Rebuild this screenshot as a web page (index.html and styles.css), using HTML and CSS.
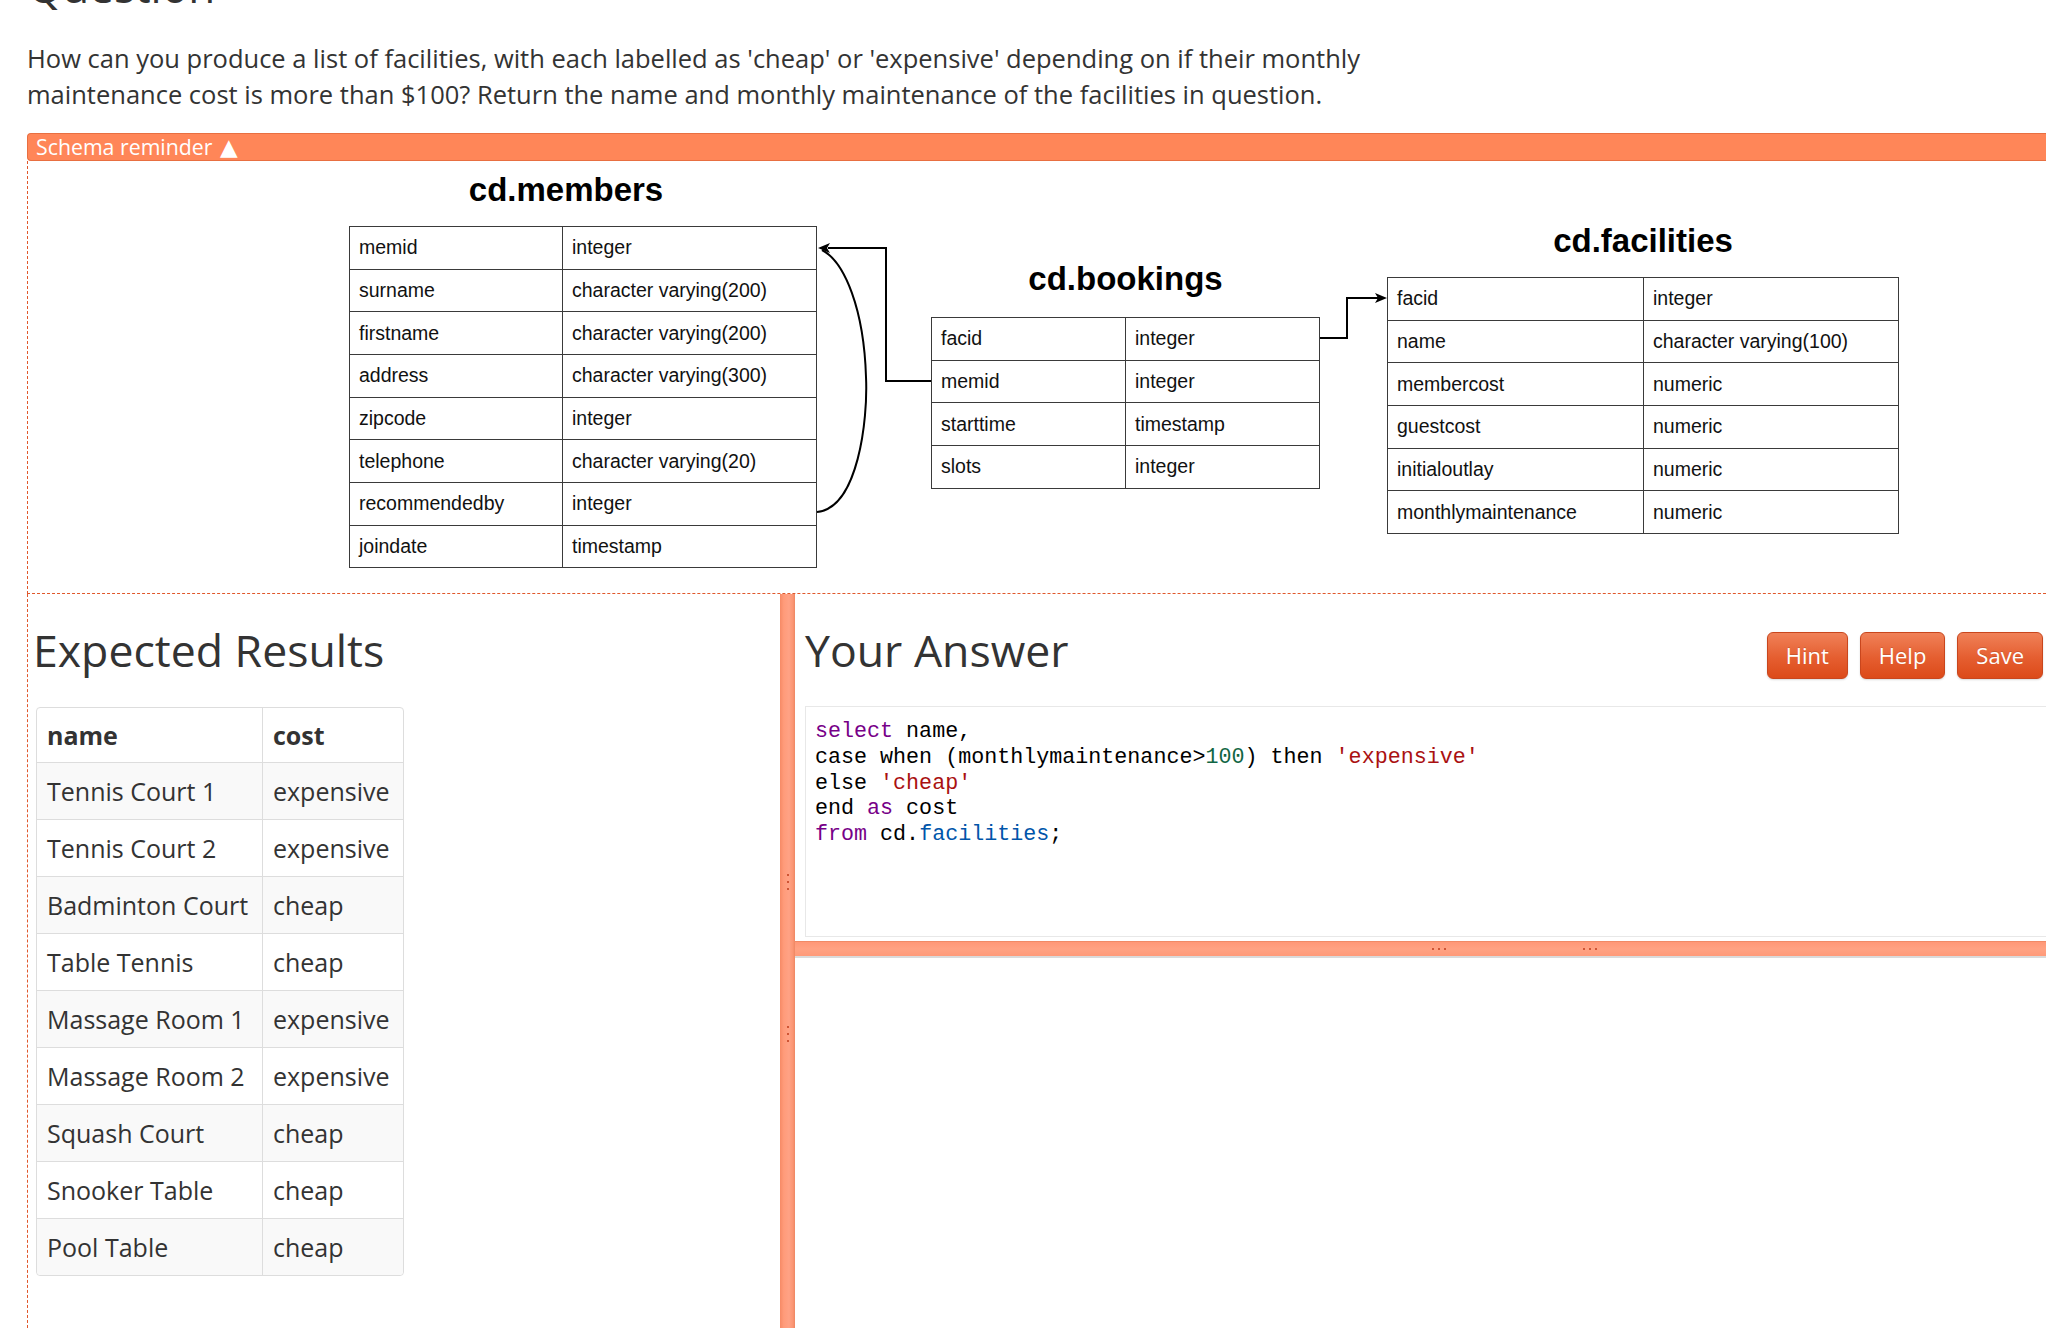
FILE: index.html
```html
<!DOCTYPE html>
<html lang="en">
<head>
<meta charset="utf-8">
<title>Question</title>
<link rel="stylesheet" href="styles.css">
</head>
<body>
<div class="page">
  <h1 class="q-title">Question</h1>
  <p class="q-text">How can you produce a list of facilities, with each labelled as 'cheap' or 'expensive' depending on if their monthly<br>maintenance cost is more than $100? Return the name and monthly maintenance of the facilities in question.</p>

  <div class="schema-bar">Schema reminder <span class="tri">&#9650;</span></div>
  <div class="schema-panel">
    <div class="diagram">
      <svg class="links" width="1900" height="432" viewBox="0 0 1900 432">
        <polyline points="903,220 858,220 858,87 800,87" fill="none" stroke="#000" stroke-width="2"/>
        <path d="M 789 351 C 830 347, 840 259, 838 216 C 836 149, 817 101, 794 89" fill="none" stroke="#000" stroke-width="2"/>
        <polygon points="790,87 802,82 799,87 802,92" fill="#000"/>
        <polyline points="1292,177 1319,177 1319,137 1350,137" fill="none" stroke="#000" stroke-width="2"/>
        <polygon points="1359,137 1347,132 1350,137 1347,142" fill="#000"/>
      </svg>

      <div class="node node-members">
        <div class="node-title node-title-shift">cd.members</div>
        <table class="er">
          <colgroup><col class="c-members"><col></colgroup>
          <tr><td>memid</td><td>integer</td></tr>
          <tr><td>surname</td><td>character varying(200)</td></tr>
          <tr><td>firstname</td><td>character varying(200)</td></tr>
          <tr><td>address</td><td>character varying(300)</td></tr>
          <tr><td>zipcode</td><td>integer</td></tr>
          <tr><td>telephone</td><td>character varying(20)</td></tr>
          <tr><td>recommendedby</td><td>integer</td></tr>
          <tr><td>joindate</td><td>timestamp</td></tr>
        </table>
      </div>

      <div class="node node-bookings">
        <div class="node-title">cd.bookings</div>
        <table class="er">
          <colgroup><col class="c-bookings"><col></colgroup>
          <tr><td>facid</td><td>integer</td></tr>
          <tr><td>memid</td><td>integer</td></tr>
          <tr><td>starttime</td><td>timestamp</td></tr>
          <tr><td>slots</td><td>integer</td></tr>
        </table>
      </div>

      <div class="node node-facilities">
        <div class="node-title">cd.facilities</div>
        <table class="er">
          <colgroup><col class="c-facilities"><col></colgroup>
          <tr><td>facid</td><td>integer</td></tr>
          <tr><td>name</td><td>character varying(100)</td></tr>
          <tr><td>membercost</td><td>numeric</td></tr>
          <tr><td>guestcost</td><td>numeric</td></tr>
          <tr><td>initialoutlay</td><td>numeric</td></tr>
          <tr><td>monthlymaintenance</td><td>numeric</td></tr>
        </table>
      </div>
    </div>
  </div>

  <div class="workspace">
    <section class="expected">
      <h2 class="pane-title">Expected Results</h2>
      <table class="results">
        <colgroup><col class="r-c1"><col class="r-c2"></colgroup>
        <thead><tr><th>name</th><th>cost</th></tr></thead>
        <tbody>
          <tr><td>Tennis Court 1</td><td>expensive</td></tr>
          <tr><td>Tennis Court 2</td><td>expensive</td></tr>
          <tr><td>Badminton Court</td><td>cheap</td></tr>
          <tr><td>Table Tennis</td><td>cheap</td></tr>
          <tr><td>Massage Room 1</td><td>expensive</td></tr>
          <tr><td>Massage Room 2</td><td>expensive</td></tr>
          <tr><td>Squash Court</td><td>cheap</td></tr>
          <tr><td>Snooker Table</td><td>cheap</td></tr>
          <tr><td>Pool Table</td><td>cheap</td></tr>
        </tbody>
      </table>
    </section>

    <div class="vsplit">
      <span class="grip grip-v grip-v1"></span>
      <span class="grip grip-v grip-v2"></span>
    </div>

    <section class="answer">
      <div class="answer-top">
        <div class="answer-head">
          <h2 class="pane-title">Your Answer</h2>
          <div class="btns">
            <button class="btn">Hint</button>
            <button class="btn">Help</button>
            <button class="btn">Save</button>
          </div>
        </div>
        <div class="editor">
<pre class="code"><span class="kw">select</span> name,
case when (monthlymaintenance&gt;<span class="num">100</span>) then <span class="str">'expensive'</span>
else <span class="str">'cheap'</span>
end <span class="kw">as</span> cost
<span class="kw">from</span> cd.<span class="var">facilities</span>;</pre>
        </div>
      </div>
      <div class="hsplit">
        <span class="grip grip-h grip-h1"></span>
        <span class="grip grip-h grip-h2"></span>
      </div>
    </section>
  </div>
</div>
</body>
</html>
```

FILE: styles.css
```css
html, body {
  margin: 0;
  padding: 0;
  background: #fff;
  overflow: hidden;
}

body {
  font-family: "Open Sans", "Noto Sans", sans-serif;
  color: #333;
  height: 1328px;
}

.page {
  padding-left: 27px;
}

.q-title {
  font-size: 44px;
  line-height: 48px;
  font-weight: 400;
  margin: -38px 0 0 0;
  padding-left: 1px;
}

.q-text {
  font-size: 25.5px;
  line-height: 36px;
  margin: 30px 0 0 0;
}

.schema-bar {
  margin-top: 21px;
  height: 26px;
  line-height: 26px;
  border: 1px solid #e86f41;
  border-right: none;
  border-radius: 4px 0 0 4px;
  background: #ff8658;
  color: #fff;
  font-size: 21.3px;
  padding-left: 8px;
}

.tri {
  font-family: "DejaVu Sans", sans-serif;
  font-size: 23px;
  line-height: 20px;
  margin-left: 2px;
}

.schema-panel {
  border-left: 1px dashed #e0582c;
  border-bottom: 1px dashed #e0582c;
  height: 432px;
}

.diagram {
  position: relative;
  height: 432px;
}

.links {
  position: absolute;
  left: 0;
  top: 0;
  overflow: visible;
}

.node {
  position: absolute;
}

.node-members { left: 321px; top: 12px; }
.node-bookings { left: 903px; top: 101px; }
.node-facilities { left: 1359px; top: 63px; }

.node-title {
  font-family: "Liberation Sans", Arial, sans-serif;
  font-weight: 700;
  font-size: 33px;
  line-height: 34px;
  color: #000;
  text-align: center;
  margin-bottom: 19px;
}

.node-bookings .node-title {
  margin-bottom: 21px;
}

.node-title-shift {
  padding-right: 34px;
}

.er {
  border-collapse: collapse;
  font-family: "Liberation Sans", Arial, sans-serif;
  font-size: 19.5px;
  color: #111;
  table-layout: fixed;
}

.node-members .er { width: 468px; }
.node-bookings .er { width: 389px; }
.node-facilities .er { width: 512px; }

.c-members { width: 213px; }
.c-bookings { width: 194px; }
.c-facilities { width: 256px; }

.er td {
  border: 1px solid #3a3a3a;
  height: 42.67px;
  padding: 0 9px;
  box-sizing: border-box;
  white-space: nowrap;
}

.workspace {
  display: flex;
  height: 734px;
}

.expected {
  width: 753px;
  box-sizing: border-box;
  border-left: 1px dashed #e0582c;
  padding: 32px 0 0 8px;
}

.pane-title {
  font-size: 44.6px;
  line-height: 48px;
  font-weight: 400;
  margin: 0 0 0 -3px;
  color: #333;
}

.results {
  margin-top: 33px;
  border-collapse: separate;
  border-spacing: 0;
  border: 1px solid #ddd;
  border-radius: 4px;
  font-size: 25px;
  line-height: 36px;
  table-layout: fixed;
  width: 366px;
}

.r-c1 { width: 225px; }
.r-c2 { width: 141px; }

.results th,
.results td {
  text-align: left;
  padding: 10px 10px;
  border-top: 1px solid #ddd;
  border-left: 1px solid #ddd;
  white-space: nowrap;
}

.results th {
  padding: 9px 10px;
  border-top: none;
  font-weight: 700;
}

.results th:first-child,
.results td:first-child {
  border-left: none;
}

.results tbody tr:nth-child(odd) td {
  background: #f9f9f9;
}

.results tbody tr:last-child td:first-child { border-bottom-left-radius: 4px; }
.results tbody tr:last-child td:last-child { border-bottom-right-radius: 4px; }

.vsplit {
  position: relative;
  width: 15px;
  flex: none;
  background: linear-gradient(to right, #f68a66 0, #ff9b7a 25%, #ffa285 60%, #fb9674 85%, #ee8763 100%);
}

.answer {
  flex: 1;
  min-width: 0;
  display: flex;
  flex-direction: column;
}

.answer-top {
  padding: 32px 3px 0 10px;
}

.answer-head {
  display: flex;
  justify-content: space-between;
  align-items: flex-start;
}

.answer-head .pane-title {
  margin-left: 0;
}

.btns {
  display: flex;
  gap: 12px;
  margin-top: 6px;
}

.btn {
  height: 47px;
  padding: 0 18px;
  font-family: "Open Sans", sans-serif;
  font-size: 22px;
  line-height: 45px;
  color: #fff;
  border: 1px solid #c9461d;
  border-radius: 6px;
  background: linear-gradient(to bottom, #f08158 0%, #e55e30 55%, #dc4a19 100%);
  text-shadow: 0 -1px 0 rgba(0, 0, 0, 0.15);
  box-shadow: 0 1px 2px rgba(0, 0, 0, 0.15);
}

.editor {
  margin-top: 27px;
  margin-right: -40px;
  height: 229px;
  border: 1px solid #e8e8e8;
}

.code {
  margin: 0;
  padding: 12px 9px;
  font-family: "Liberation Mono", "DejaVu Sans Mono", monospace;
  font-size: 21.7px;
  line-height: 25.8px;
  color: #000;
}

.kw { color: #770088; }
.num { color: #116644; }
.str { color: #aa1111; }
.var { color: #0055aa; }

.hsplit {
  position: relative;
  margin-top: 4px;
  height: 14px;
  border-top: 1px solid #f08a66;
  border-bottom: 2px solid #dadada;
  background: linear-gradient(to bottom, #ff9877 0, #ffa283 50%, #ff9a79 100%);
}

.grip {
  position: absolute;
  width: 2px;
  height: 2px;
  background: #cf5535;
}

.grip-v {
  left: 7px;
  box-shadow: 0 7px 0 #cf5535, 0 14px 0 #cf5535;
}

.grip-v1 { top: 280px; }
.grip-v2 { top: 432px; }

.grip-h {
  top: 6px;
  box-shadow: 6px 0 0 #cf5535, 12px 0 0 #cf5535;
}

.grip-h1 { left: 637px; }
.grip-h2 { left: 788px; }
```
